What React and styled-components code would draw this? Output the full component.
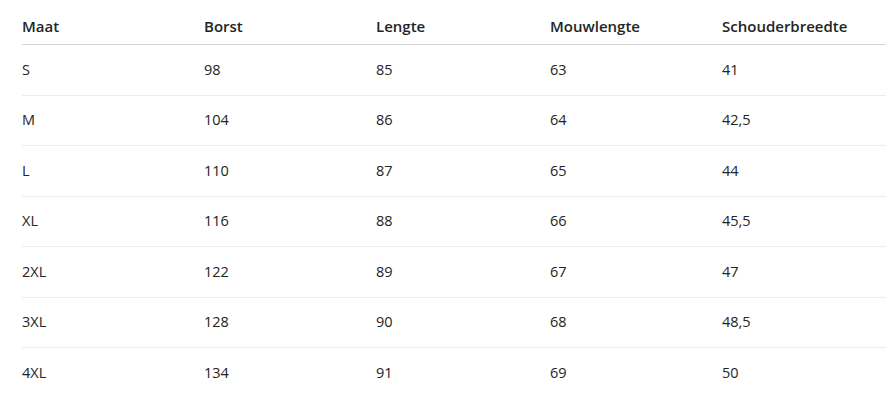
import React from "react";
import styled, { createGlobalStyle } from "styled-components";

const GlobalStyle = createGlobalStyle`
  body {
    margin: 0;
    background: #fff;
    font-family: "Open Sans", "Noto Sans", "Liberation Sans", sans-serif;
  }
`;

const columns = ["Maat", "Borst", "Lengte", "Mouwlengte", "Schouderbreedte"];
const widths = [182, 172, 174, 172, 164];

const rows = [
  ["S", "98", "85", "63", "41"],
  ["M", "104", "86", "64", "42,5"],
  ["L", "110", "87", "65", "44"],
  ["XL", "116", "88", "66", "45,5"],
  ["2XL", "122", "89", "67", "47"],
  ["3XL", "128", "90", "68", "48,5"],
  ["4XL", "134", "91", "69", "50"],
];

const Page = styled.div`
  padding: 8px 9px 0 22px;
`;

const Table = styled.table`
  width: 864px;
  border-collapse: collapse;
  table-layout: fixed;
  color: #242424;
  line-height: 20px;
`;

const HeadCell = styled.th`
  text-align: left;
  font-size: 15px;
  font-weight: 600;
  padding: 8px 0;
  border-bottom: 1px solid #d6d6d6;
`;

const Row = styled.tr`
  border-bottom: 1px solid ${({ $last }) => ($last ? "transparent" : "#ededed")};
`;

const Cell = styled.td`
  padding: 14.75px 0;
  font-size: 14.5px;
  font-weight: 400;
`;

const App = () => {
  return (
    <Page>
      <GlobalStyle />
      <Table>
        <colgroup>
          {widths.map((w, i) => (
            <col key={i} style={{ width: w }} />
          ))}
        </colgroup>
        <thead>
          <tr>
            {columns.map((c) => (
              <HeadCell key={c}>{c}</HeadCell>
            ))}
          </tr>
        </thead>
        <tbody>
          {rows.map((r, i) => (
            <Row key={r[0]} $last={i === rows.length - 1}>
              {r.map((v, j) => (
                <Cell key={j}>{v}</Cell>
              ))}
            </Row>
          ))}
        </tbody>
      </Table>
    </Page>
  );
};

export default App;
